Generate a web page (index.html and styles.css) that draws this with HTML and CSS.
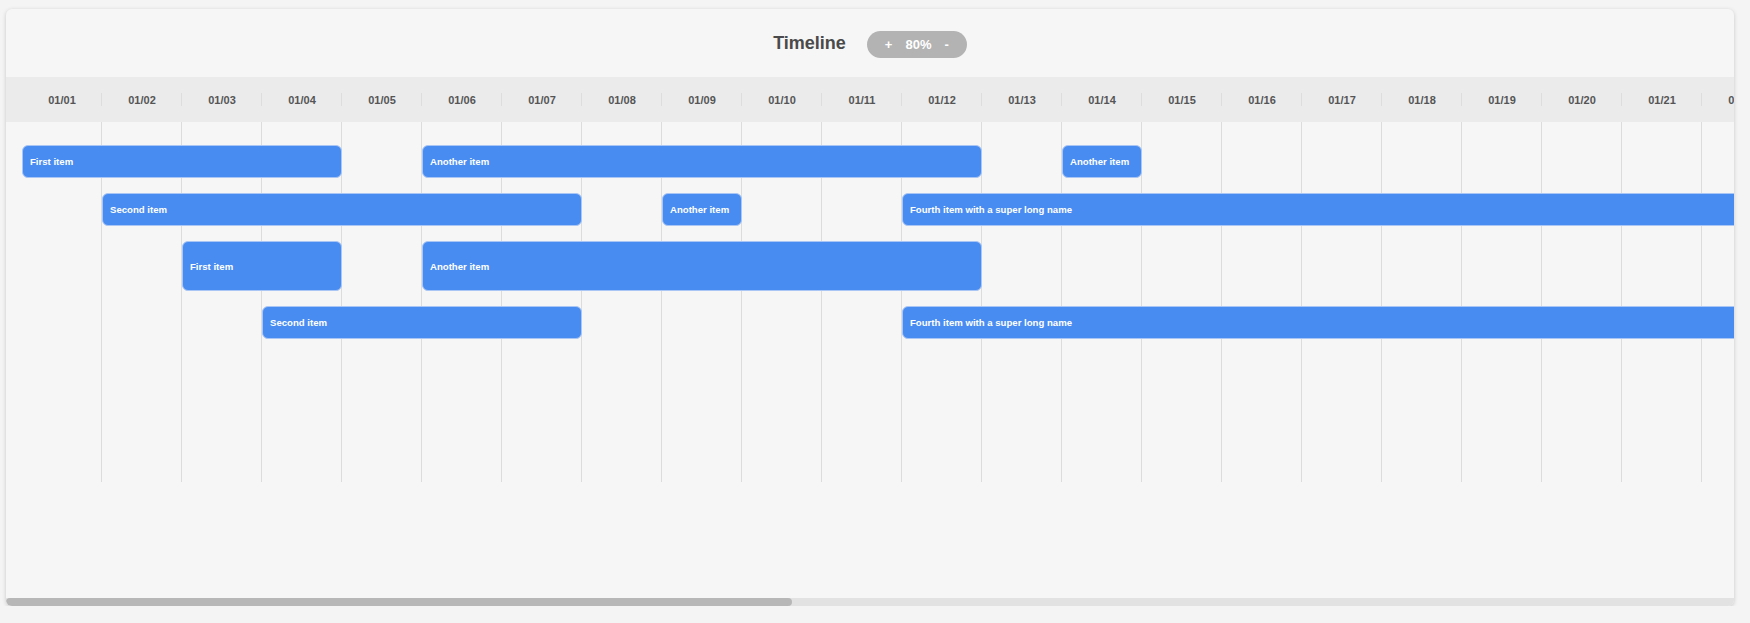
FILE: index.html
```html
<!DOCTYPE html>
<html>
<head>
<meta charset="utf-8">
<link rel="stylesheet" href="styles.css">
</head>
<body>
<div class="page">
  <div class="card">
    <div class="top">
      <h1 class="title">Timeline</h1>
      <div class="zoom"><span>+</span><span>80%</span><span>-</span></div>
    </div>
    <div class="scroller">
      <div class="content">
        <div class="dates">
          <div class="date">01/01</div><div class="date">01/02</div><div class="date">01/03</div><div class="date">01/04</div><div class="date">01/05</div><div class="date">01/06</div><div class="date">01/07</div><div class="date">01/08</div><div class="date">01/09</div><div class="date">01/10</div><div class="date">01/11</div><div class="date">01/12</div><div class="date">01/13</div><div class="date">01/14</div><div class="date">01/15</div><div class="date">01/16</div><div class="date">01/17</div><div class="date">01/18</div><div class="date">01/19</div><div class="date">01/20</div><div class="date">01/21</div><div class="date">01/22</div><div class="date">01/23</div><div class="date">01/24</div><div class="date">01/25</div><div class="date">01/26</div><div class="date">01/27</div><div class="date">01/28</div><div class="date">01/29</div><div class="date">01/30</div><div class="date">01/31</div><div class="date">02/01</div><div class="date">02/02</div><div class="date">02/03</div><div class="date">02/04</div><div class="date">02/05</div><div class="date">02/06</div><div class="date">02/07</div><div class="date">02/08</div><div class="date">02/09</div><div class="date">02/10</div><div class="date">02/11</div><div class="date">02/12</div><div class="date">02/13</div><div class="date">02/14</div><div class="date">02/15</div><div class="date">02/16</div>
        </div>
        <div class="body">
          <div class="items">
            <div class="item r1" style="grid-column: 1 / span 4">First item</div>
            <div class="item r1" style="grid-column: 6 / span 7">Another item</div>
            <div class="item r1" style="grid-column: 14 / span 1">Another item</div>
            <div class="item r2" style="grid-column: 2 / span 6">Second item</div>
            <div class="item r2" style="grid-column: 9 / span 1">Another item</div>
            <div class="item r2" style="grid-column: 12 / span 14">Fourth item with a super long name</div>
            <div class="item r3" style="grid-column: 3 / span 2">First item</div>
            <div class="item r3" style="grid-column: 6 / span 7">Another item</div>
            <div class="item r4" style="grid-column: 4 / span 4">Second item</div>
            <div class="item r4" style="grid-column: 12 / span 14">Fourth item with a super long name</div>
          </div>
        </div>
      </div>
    </div>
    <div class="hscroll"><div class="thumb"></div></div>
  </div>
</div>
</body>
</html>
```

FILE: styles.css
```css
* { box-sizing: border-box; }

html, body {
  margin: 0;
  padding: 0;
  background: #f4f4f4;
  font-family: "Liberation Sans", Arial, sans-serif;
}

.page {
  padding: 9px 16px 0 6px;
}

.card {
  width: 1728px;
  height: 597px;
  background: #f6f6f6;
  border-radius: 6px;
  box-shadow: 0 1px 4px rgba(0, 0, 0, 0.18);
  overflow: hidden;
  display: flex;
  flex-direction: column;
}

.top {
  height: 68px;
  flex: none;
  display: flex;
  align-items: center;
  justify-content: center;
  gap: 21px;
  padding-top: 1px;
}

.title {
  margin: 0;
  font-size: 18px;
  font-weight: bold;
  color: #4a4a4a;
}

.zoom {
  height: 27px;
  display: flex;
  align-items: center;
  gap: 13px;
  padding: 0 18px;
  border-radius: 14px;
  background: #b3b3b3;
  color: #ffffff;
  font-size: 13px;
  font-weight: bold;
  margin-top: 2px;
}

.scroller {
  flex: 1;
  overflow: hidden;
}

.hscroll {
  flex: none;
  height: 8px;
  background: #e2e2e2;
}

.thumb {
  width: 786px;
  height: 8px;
  background: #b7b7b7;
  border-radius: 4px;
}

.content {
  width: 3800px;
}

.dates {
  height: 45px;
  background: #ebebeb;
  display: flex;
  padding-left: 16px;
}

.date {
  flex: none;
  width: 80px;
  height: 45px;
  display: flex;
  align-items: center;
  justify-content: center;
  font-size: 11px;
  font-weight: bold;
  color: #555555;
  background: linear-gradient(#dddddd, #dddddd) right center / 1px 13px no-repeat;
}

.body {
  margin-left: 16px;
  width: 3760px;
  height: 360px;
  background: repeating-linear-gradient(to right, transparent 0 79px, #dcdcdc 79px 80px);
  padding-top: 23px;
}

.items {
  display: grid;
  grid-template-columns: repeat(47, 80px);
  grid-template-rows: 33px 33px 50px 33px;
  row-gap: 15px;
}

.item {
  background: #488cf2;
  border: 1px solid #a9c6f4;
  border-radius: 6px;
  color: #ffffff;
  font-size: 9.6px;
  font-weight: bold;
  display: flex;
  align-items: center;
  padding-left: 7px;
  white-space: nowrap;
  overflow: hidden;
}

.r1 { grid-row: 1; }
.r2 { grid-row: 2; }
.r3 { grid-row: 3; }
.r4 { grid-row: 4; }
```
